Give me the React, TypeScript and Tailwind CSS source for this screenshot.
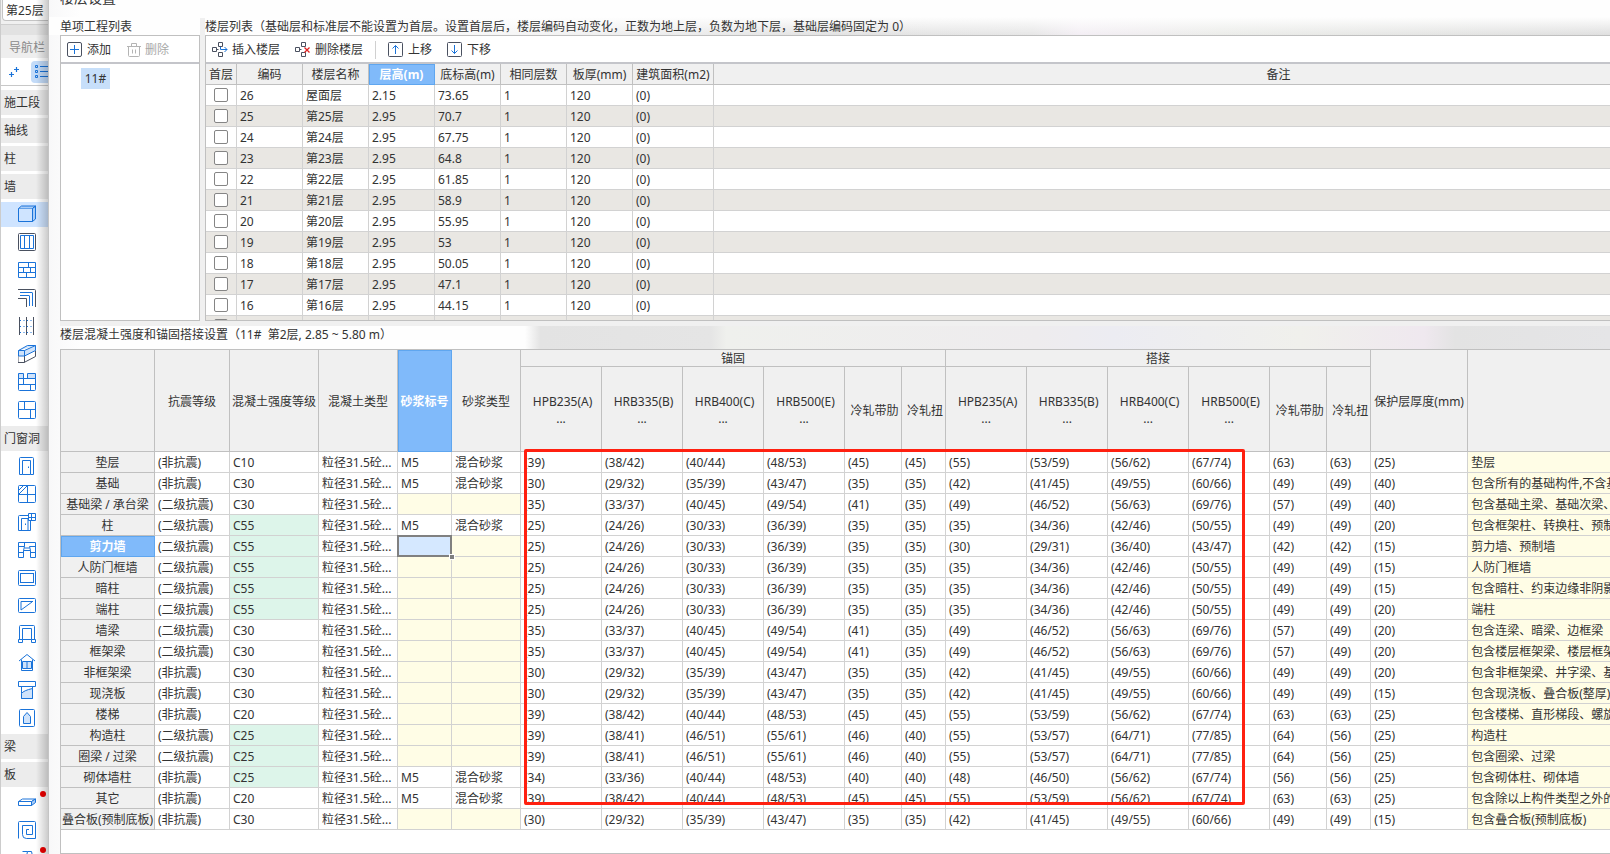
import type { ReactNode } from "react";

const BLUE = "#1a73d9";
const DARK = "#4a5160";

function Icon({ children, size = 18 }: { children: ReactNode; size?: number }) {
  return (
    <svg
      width={size}
      height={size}
      viewBox={`0 0 ${size} ${size}`}
      fill="none"
      stroke={BLUE}
      strokeWidth="1"
      className="block shrink-0"
      aria-hidden="true"
    >
      {children}
    </svg>
  );
}

type NavItem = { text: string } | { name: string; icon: ReactNode; active?: boolean; dot?: boolean };

const navItems: NavItem[] = [
  { text: "施工段" },
  { text: "轴线" },
  { text: "柱" },
  { text: "墙" },
  {
    name: "剪力墙",
    active: true,
    icon: (
      <>
        <path d="M0.5 3.5h14v13h-14z" strokeLinejoin="round" />
        <path d="M0.5 3.5l3-2.5h14l-3 2.5M17.5 1v13l-3 2.5v-13z" fill="#a9cdf8" strokeLinejoin="round" />
      </>
    ),
  },
  {
    name: "人防门框墙",
    icon: (
      <>
        <rect x="0.5" y="0.5" width="17" height="17" rx="1" stroke={DARK} />
        <path d="M2.5 2.5h13v13h-13zM6.5 2.5v13M11.5 2.5v13" />
      </>
    ),
  },
  {
    name: "砌体墙",
    icon: <path d="M0.5 1.5h17v15h-17zM0.5 6.5h17M0.5 11.5h17M10.5 1.5v5M5.5 6.5v5M12.5 6.5v5M8.5 11.5v5" />,
  },
  {
    name: "砌体加筋",
    icon: (
      <>
        <path d="M0 0.5h16.5q1 0 1 1V18M0 9.5h8.5V18" stroke={DARK} />
        <path d="M2 3.5h12q0.5 0 0.5 0.5v13M2 6.5h9q0.5 0 0.5 0.5v10" />
      </>
    ),
  },
  {
    name: "保温墙",
    icon: (
      <>
        <path d="M1.5 0v18M8.5 0v18M15.5 0v18" stroke={DARK} />
        <path d="M2 3.5h13M2 9.5h13M2 15.5h13" strokeDasharray="1 2.5" />
      </>
    ),
  },
  {
    name: "暗梁",
    icon: (
      <>
        <path d="M0 10.5v7h6M6 17.500l11.500-6v-6M6.500 10.500v7" stroke={DARK} />
        <path d="M0.5 5.5l9-5h8v5l-11 5.5h-6zM0.5 5.5h6l11-5M6.5 5.5V11" fill="#cfe3fb" strokeLinejoin="round" />
      </>
    ),
  },
  {
    name: "墙垛",
    icon: (
      <>
        <path d="M0.5 0.5h5v5h-5zM9.5 0.5h8v5h-8z" fill="#cfe3fb" />
        <path d="M0.5 5.5h17v11q0 1-1 1h-15q-1 0-1-1zM0.5 11.5h17M5.5 5.5v6M12.5 11.5v6" />
      </>
    ),
  },
  {
    name: "幕墙",
    icon: (
      <>
        <rect x="0.5" y="0.5" width="17" height="17" rx="1" />
        <path d="M0.5 8.5h17M6.5 0.5v8M12.5 8.5v9" />
      </>
    ),
  },
  { text: "门窗洞" },
  {
    name: "门",
    icon: (
      <>
        <path d="M1.5 17.5v-16q0-1 1-1h12q1 0 1 1v16h-3v-14h-8v14zM4.5 17.5h8" />
        <path d="M10.5 9.500v1.500" />
      </>
    ),
  },
  {
    name: "窗",
    icon: (
      <>
        <rect x="0.500" y="0.5" width="17" height="17" rx="1" />
        <path d="M9.5 0.5v17M0 9.5h17.5M1 5l4-4M1 9l8-8" />
      </>
    ),
  },
  {
    name: "门联窗",
    icon: (
      <>
        <path d="M10.500 0.500h7v7h-7zM13.500 0.500v7M10.500 4.500h7" />
        <path d="M10.500 2.500H1.500q-1 0-1 1v14h12V7.500M3.500 17.500v-12h6.500v12M7.500 10.500v1.500" />
      </>
    ),
  },
  {
    name: "墙洞",
    icon: (
      <path d="M0.500 1.500h17v15h-5v-7h-7v7h-5zM0.500 5.500h6M11.500 5.500h6M6.500 1.500v4l-1 4M11.500 5.500l1 4M6.500 7h5M0.500 11.500h5M12.500 11.500h5" />
    ),
  },
  {
    name: "带形窗",
    icon: (
      <>
        <rect x="0.500" y="1.500" width="17" height="15" rx="1" />
        <rect x="2.500" y="4.500" width="13" height="9" />
      </>
    ),
  },
  {
    name: "带形洞",
    icon: (
      <>
        <rect x="0.500" y="1.500" width="17" height="14" rx="1" />
        <path d="M3 13V4.500h12M3 13L14 5" />
      </>
    ),
  },
  {
    name: "飘窗",
    icon: <path d="M1.500 14.500V1.500q0-1 1-1h13q1 0 1 1v13M4.500 14.500v-11h9v11M0.500 14.500h4v3h-4zM13.500 14.500h4v3h-4zM4.500 14.500h9" />,
  },
  {
    name: "老虎窗",
    icon: (
      <>
        <path d="M1 8l8-6.500L17 8M3.500 6.500v11h11v-11" strokeLinejoin="round" />
        <path d="M4.500 8.500h9v7h-9zM9 8.500v7" fill="#cfe3fb" />
      </>
    ),
  },
  {
    name: "过梁",
    icon: (
      <>
        <path d="M0.500 0.500h17v5h-17zM3.500 5.500h11v12h-11z" />
        <path d="M3.500 12.500q2-3 11-5v10h-11z" fill="#cfe3fb" />
      </>
    ),
  },
  {
    name: "壁龛",
    icon: (
      <>
        <rect x="1.500" y="0.500" width="15" height="17" rx="1" />
        <path d="M5.500 14.500v-7l3.500-4 3.500 4v7z" fill="#cfe3fb" />
      </>
    ),
  },
  { text: "梁" },
  { text: "板" },
  {
    name: "现浇板",
    dot: true,
    icon: (
      <>
        <path d="M0.500 8.500l4-2.500h13l-4 2.500zM0.500 8.500v4h13v-4" strokeLinejoin="round" />
        <path d="M13.500 8.500l4-2.500v3.500l-4 3z" fill="#a9cdf8" />
      </>
    ),
  },
  {
    name: "螺旋板",
    icon: <path d="M0.500 17.500v-16q0-1 1-1h15q1 0 1 1v16h-9q-4 0-4-4v-9h10v9h-6v-5h2.500" />,
  },
  {
    name: "坡道",
    dot: true,
    icon: <path d="M4.500 2.500h5l-3 14h-6M9.500 2.500h4l3 14h-10M2 10h9" />,
  },
];

const floorHeads = ["首层", "编码", "楼层名称", "层高(m)", "底标高(m)", "相同层数", "板厚(mm)", "建筑面积(m2)", "备注"];

const floors = [
  ["26", "屋面层", "2.15", "73.65"],
  ["25", "第25层", "2.95", "70.7"],
  ["24", "第24层", "2.95", "67.75"],
  ["23", "第23层", "2.95", "64.8"],
  ["22", "第22层", "2.95", "61.85"],
  ["21", "第21层", "2.95", "58.9"],
  ["20", "第20层", "2.95", "55.95"],
  ["19", "第19层", "2.95", "53"],
  ["18", "第18层", "2.95", "50.05"],
  ["17", "第17层", "2.95", "47.1"],
  ["16", "第16层", "2.95", "44.15"],
  ["15", "第15层", "2.95", "41.2"],
];

type Part = {
  name: string;
  seismic: string;
  grade: string;
  changed?: boolean;
  mortar?: boolean;
  values: string;
  cover: string;
  note: string;
};

const S_39 = "39 38/42 40/44 48/53 45 45 55 53/59 56/62 67/74 63 63";
const S_30 = "30 29/32 35/39 43/47 35 35 42 41/45 49/55 60/66 49 49";
const S_35 = "35 33/37 40/45 49/54 41 35 49 46/52 56/63 69/76 57 49";
const S_25 = "25 24/26 30/33 36/39 35 35 35 34/36 42/46 50/55 49 49";
const S_WALL = "25 24/26 30/33 36/39 35 35 30 29/31 36/40 43/47 42 42";
const S_TIE = "39 38/41 46/51 55/61 46 40 55 53/57 64/71 77/85 64 56";
const S_MASONRY = "34 33/36 40/44 48/53 40 40 48 46/50 56/62 67/74 56 56";

const parts: Part[] = [
  { name: "垫层", seismic: "(非抗震)", grade: "C10", mortar: true, values: S_39, cover: "25", note: "垫层" },
  { name: "基础", seismic: "(非抗震)", grade: "C30", mortar: true, values: S_30, cover: "40", note: "包含所有的基础构件,不含基础梁" },
  { name: "基础梁 / 承台梁", seismic: "(二级抗震)", grade: "C30", values: S_35, cover: "40", note: "包含基础主梁、基础次梁、承台梁" },
  { name: "柱", seismic: "(二级抗震)", grade: "C55", changed: true, mortar: true, values: S_25, cover: "20", note: "包含框架柱、转换柱、预制柱" },
  { name: "剪力墙", seismic: "(二级抗震)", grade: "C55", changed: true, values: S_WALL, cover: "15", note: "剪力墙、预制墙" },
  { name: "人防门框墙", seismic: "(二级抗震)", grade: "C55", changed: true, values: S_25, cover: "15", note: "人防门框墙" },
  { name: "暗柱", seismic: "(二级抗震)", grade: "C55", changed: true, values: S_25, cover: "15", note: "包含暗柱、约束边缘非阴影区" },
  { name: "端柱", seismic: "(二级抗震)", grade: "C55", changed: true, values: S_25, cover: "20", note: "端柱" },
  { name: "墙梁", seismic: "(二级抗震)", grade: "C30", values: S_35, cover: "20", note: "包含连梁、暗梁、边框梁" },
  { name: "框架梁", seismic: "(二级抗震)", grade: "C30", values: S_35, cover: "20", note: "包含楼层框架梁、楼层框架扁梁" },
  { name: "非框架梁", seismic: "(非抗震)", grade: "C30", values: S_30, cover: "20", note: "包含非框架梁、井字梁、基础联系梁" },
  { name: "现浇板", seismic: "(非抗震)", grade: "C30", values: S_30, cover: "15", note: "包含现浇板、叠合板(整厚)、螺旋板" },
  { name: "楼梯", seismic: "(非抗震)", grade: "C20", values: S_39, cover: "25", note: "包含楼梯、直形梯段、螺旋梯段" },
  { name: "构造柱", seismic: "(二级抗震)", grade: "C25", changed: true, values: S_TIE, cover: "25", note: "构造柱" },
  { name: "圈梁 / 过梁", seismic: "(二级抗震)", grade: "C25", changed: true, values: S_TIE, cover: "25", note: "包含圈梁、过梁" },
  { name: "砌体墙柱", seismic: "(非抗震)", grade: "C25", changed: true, mortar: true, values: S_MASONRY, cover: "25", note: "包含砌体柱、砌体墙" },
  { name: "其它", seismic: "(非抗震)", grade: "C20", mortar: true, values: S_39, cover: "25", note: "包含除以上构件类型之外的所有构件" },
  { name: "叠合板(预制底板)", seismic: "(非抗震)", grade: "C30", values: S_30, cover: "15", note: "包含叠合板(预制底板)" },
];

const SELECTED_PART = "剪力墙";
const steelHeads = ["HPB235(A)", "HRB335(B)", "HRB400(C)", "HRB500(E)", "冷轧带肋", "冷轧扭"];

const headCell =
  "border-r border-b border-[#c0c0c0] bg-[#f0f0f0] px-0 pt-[2px] pb-0 text-center font-normal whitespace-nowrap overflow-hidden";
const activeHead =
  "border-r border-b border-[#5fa6ef] bg-[#80bafa] px-0 pt-[2px] pb-0 text-center font-bold text-white whitespace-nowrap overflow-hidden shadow-[inset_1px_1px_0_#5fa6ef]";
const bodyCell =
  "h-[21px] border-r border-b border-[#d2d2d2] pt-[2px] pr-0 pb-0 pl-[3px] whitespace-nowrap overflow-hidden";

function ToolButton({ icon, label, disabled }: { icon: ReactNode; label: string; disabled?: boolean }) {
  return (
    <button type="button" disabled={disabled} className="flex items-center gap-1 disabled:text-[#a8a8a8]">
      {icon}
      <span>{label}</span>
    </button>
  );
}

function Sidebar() {
  return (
    <aside className="relative w-12 shrink-0 overflow-hidden border-l border-[#cccccc] bg-white">
      <div className="h-6 bg-[#f0f0f0] pl-px">
        <select
          aria-label="当前楼层"
          className="block h-[21px] w-24 appearance-none rounded-b border border-t-0 border-[#c4c4c4] bg-white pt-[2px] pl-[3px]"
        >
          <option>第25层</option>
        </select>
      </div>
      <div className="h-[11px] border-t border-[#cfcfcf] bg-[#e2e2e2]" />
      <div className="flex h-[23px] items-center bg-[#eeeeee] pt-[2px] pl-2 whitespace-nowrap text-[#8a8a8a]">
        导航栏
      </div>
      <div className="flex h-7 items-center border-b border-[#c8c8c8] bg-white">
        <button type="button" aria-label="新建" className="pl-2">
          <Icon size={10}>
            <path d="M0 7.500h5M2.500 5v5M5 2.500h5M7.500 0v5" strokeWidth="1.200" />
          </Icon>
        </button>
        <button
          type="button"
          aria-label="列表"
          className="ml-3 flex h-[22px] w-8 shrink-0 items-center rounded bg-[#c3dbf8] pl-[3px]"
        >
          <Icon size={18}>
            <path d="M1.500 2.500h2v2h-2zM1.500 7.500h2v2h-2zM1.500 12.500h2v2h-2zM6 3.500h12M6 8.500h12M6 13.500h12" />
          </Icon>
        </button>
      </div>
      <nav className="mt-1 flex flex-col gap-[3px]">
        {navItems.map((item, i) =>
          "text" in item ? (
            <button
              type="button"
              key={i}
              className="flex h-[25px] shrink-0 items-center bg-[#ececec] pt-px pl-[3px] whitespace-nowrap"
            >
              {item.text}
            </button>
          ) : (
            <button
              type="button"
              key={i}
              aria-label={item.name}
              className={
                item.active
                  ? "relative flex h-[25px] shrink-0 items-start bg-[#cfe4ff] pt-[3px] pl-[17px]"
                  : "relative flex h-[25px] shrink-0 items-start pt-[3px] pl-[17px]"
              }
            >
              <Icon>{item.icon}</Icon>
              {item.dot && <span className="absolute top-px left-[39px] size-[6px] rounded-full bg-[#f00000]" />}
            </button>
          ),
        )}
      </nav>
      <div className="pointer-events-none absolute inset-y-0 right-0 w-3 bg-linear-to-r from-black/0 to-black/20" />
    </aside>
  );
}

function ProjectPanel() {
  return (
    <section className="flex w-[140px] shrink-0 flex-col">
      <h2 className="h-[18px] leading-5 whitespace-nowrap">单项工程列表</h2>
      <div className="flex flex-1 flex-col border border-[#c0c0c0] bg-white">
        <div className="flex h-7 items-center gap-4 border-b-2 border-[#c4c5ca] pt-[2px] pl-[6px]">
          <ToolButton
            label="添加"
            icon={
              <Icon size={16}>
                <rect x="0.500" y="0.500" width="14" height="14" rx="1.500" stroke={DARK} />
                <path d="M7.500 3v9M3 7.500h9" />
              </Icon>
            }
          />
          <ToolButton
            label="删除"
            disabled
            icon={
              <Icon size={14}>
                <path
                  d="M0 3.500h14M4.500 3.500v-3h5v3M1.500 3.500v9q0 1 1 1h9q1 0 1-1v-9M5.500 6.500v4M8.500 6.500v4"
                  stroke="#b4b4b4"
                />
              </Icon>
            }
          />
        </div>
        <button type="button" className="mt-1 ml-5 flex h-[21px] w-[29px] items-center justify-center bg-[#c7dffa]">
          11#
        </button>
      </div>
    </section>
  );
}

function FloorPanel() {
  return (
    <section className="flex min-w-0 flex-1 flex-col">
      <h2 className="h-[18px] leading-5 whitespace-nowrap">
        楼层列表（基础层和标准层不能设置为首层。设置首层后，楼层编码自动变化，正数为地上层，负数为地下层，基础层编码固定为 0）
      </h2>
      <div className="border-y border-l border-[#c0c0c0] bg-white">
        <div className="flex h-7 items-center border-b-2 border-[#c4c5ca] pt-[2px] pl-[6px]">
          <ToolButton
            label="插入楼层"
            icon={
              <Icon size={16}>
                <path d="M0.500 5.500h4v4h-4zM6.500 0.500h4v4h-4zM6.500 10.500h4v4h-4zM5 7.500h1.500" stroke={DARK} />
                <path d="M8.500 5v2.500H15M12.500 5l2.500 2.500-2.500 2.500" />
              </Icon>
            }
          />
          <span className="w-[15px]" />
          <ToolButton
            label="删除楼层"
            icon={
              <Icon size={16}>
                <path d="M0.500 5.500h4v4h-4zM6.500 0.500h4v4h-4zM6.500 10.500h4v4h-4zM5 7.500h1.500" stroke={DARK} />
                <path d="M9.500 5.500l5 5M14.500 5.500l-5 5" stroke="#e02020" strokeWidth="1.300" />
              </Icon>
            }
          />
          <span className="mx-3 h-[18px] w-px bg-[#d0d0d0]" />
          <ToolButton
            label="上移"
            icon={
              <Icon size={16}>
                <rect x="0.500" y="0.500" width="14" height="14" rx="1" stroke={DARK} />
                <path d="M7.500 12V3.500M4.500 6.500l3-3 3 3" />
              </Icon>
            }
          />
          <span className="w-[15px]" />
          <ToolButton
            label="下移"
            icon={
              <Icon size={16}>
                <rect x="0.500" y="0.500" width="14" height="14" rx="1" stroke={DARK} />
                <path d="M7.500 3v8.500M4.500 8.500l3 3 3-3" />
              </Icon>
            }
          />
        </div>
        <div className="h-64 overflow-hidden">
          <table className="w-[1638px] table-fixed border-separate border-spacing-0">
            <colgroup>
              <col className="w-[31px]" />
              <col className="w-[66px]" />
              <col className="w-[66px]" />
              <col className="w-[66px]" />
              <col className="w-[66px]" />
              <col className="w-[66px]" />
              <col className="w-[66px]" />
              <col className="w-[81px]" />
              <col />
            </colgroup>
            <thead>
              <tr>
                {floorHeads.map((h) => (
                  <th key={h} scope="col" className={h === "层高(m)" ? `h-[21px] ${activeHead}` : `h-[21px] ${headCell}`}>
                    {h}
                  </th>
                ))}
              </tr>
            </thead>
            <tbody>
              {floors.map(([code, name, height, base]) => (
                <tr key={code} className="odd:bg-white even:bg-[#e9e7e3]">
                  <td className="h-[21px] border-r border-b border-[#d2d2d2] p-0">
                    <input
                      type="checkbox"
                      aria-label={`${name} 首层`}
                      className="mx-auto block size-[14px] appearance-none rounded-xs border border-[#858585] bg-white checked:bg-[#80bafa]"
                    />
                  </td>
                  <td className={bodyCell}>{code}</td>
                  <td className={bodyCell}>{name}</td>
                  <td className={bodyCell}>{height}</td>
                  <td className={bodyCell}>{base}</td>
                  <td className={bodyCell}>1</td>
                  <td className={bodyCell}>120</td>
                  <td className={bodyCell}>(0)</td>
                  <td className={bodyCell} />
                </tr>
              ))}
            </tbody>
          </table>
        </div>
      </div>
    </section>
  );
}

function SteelHead({ label }: { label: string }) {
  return (
    <th scope="col" className={`h-[85px] leading-[17px] ${headCell}`}>
      &nbsp;{label}
      {label.startsWith("H") && <div>...</div>}
    </th>
  );
}

function MortarCells({ part }: { part: Part }) {
  if (part.mortar) {
    return (
      <>
        <td className={bodyCell}>M5</td>
        <td className={bodyCell}>混合砂浆</td>
      </>
    );
  }
  return (
    <>
      {part.name === SELECTED_PART ? (
        <td className="relative h-[21px] border-r border-b border-[#d2d2d2] bg-[#d5e8ff] p-0">
          <div className="absolute -inset-px border-2 border-[#808080]" />
          <div className="absolute -right-1 -bottom-1 size-[6px] border border-white bg-[#808080]" />
        </td>
      ) : (
        <td className={`bg-[#fffde6] ${bodyCell}`} />
      )}
      <td className={`bg-[#fffde6] ${bodyCell}`} />
    </>
  );
}

function StrengthTable() {
  return (
    <div className="relative flex-1 overflow-hidden border-y border-l border-[#c0c0c0] bg-white">
      <table className="w-[1807px] table-fixed border-separate border-spacing-0">
        <colgroup>
          <col className="w-[94px]" />
          <col className="w-[75px]" />
          <col className="w-[89px]" />
          <col className="w-[79px]" />
          <col className="w-[54px]" />
          <col className="w-[69px]" />
          <col span={4} className="w-[81px]" />
          <col className="w-[57px]" />
          <col className="w-[44px]" />
          <col span={4} className="w-[81px]" />
          <col className="w-[57px]" />
          <col className="w-[44px]" />
          <col className="w-[97px]" />
          <col />
        </colgroup>
        <thead>
          <tr>
            <th rowSpan={2} className={headCell} />
            <th rowSpan={2} scope="col" className={headCell}>抗震等级</th>
            <th rowSpan={2} scope="col" className={headCell}>混凝土强度等级</th>
            <th rowSpan={2} scope="col" className={headCell}>混凝土类型</th>
            <th rowSpan={2} scope="col" className={activeHead}>砂浆标号</th>
            <th rowSpan={2} scope="col" className={headCell}>砂浆类型</th>
            <th colSpan={6} scope="colgroup" className={`h-[17px] leading-[14px] ${headCell}`}>锚固</th>
            <th colSpan={6} scope="colgroup" className={`h-[17px] leading-[14px] ${headCell}`}>搭接</th>
            <th rowSpan={2} scope="col" className={headCell}>保护层厚度(mm)</th>
            <th rowSpan={2} className={headCell} />
          </tr>
          <tr>
            {steelHeads.map((h) => (
              <SteelHead key={`a-${h}`} label={h} />
            ))}
            {steelHeads.map((h) => (
              <SteelHead key={`l-${h}`} label={h} />
            ))}
          </tr>
        </thead>
        <tbody>
          {parts.map((part) => (
            <tr key={part.name}>
              <th scope="row" className={part.name === SELECTED_PART ? `h-[21px] ${activeHead}` : `h-[21px] ${headCell}`}>
                {part.name}
              </th>
              <td className={bodyCell}>{part.seismic}</td>
              <td className={part.changed ? `bg-[#ddf5ea] ${bodyCell}` : bodyCell}>{part.grade}</td>
              <td className={bodyCell}>粒径31.5砼...</td>
              <MortarCells part={part} />
              {part.values.split(" ").map((v, i) => (
                <td key={i} className={bodyCell}>{`(${v})`}</td>
              ))}
              <td className={bodyCell}>{`(${part.cover})`}</td>
              <td className={`bg-[#fffde6] ${bodyCell}`}>{part.note}</td>
            </tr>
          ))}
        </tbody>
      </table>
      <div className="pointer-events-none absolute top-[99px] left-[463px] h-[356px] w-[721px] rounded-xs border-3 border-[#ff2010]" />
    </div>
  );
}

export default function App() {
  return (
    <div className="flex h-screen overflow-hidden bg-white font-['Noto_Sans','Noto_Sans_CJK_SC',sans-serif] text-[12px] leading-[18px] text-[#333333]">
      <Sidebar />
      <main className="flex min-w-0 flex-1 flex-col overflow-hidden border-l border-[#c4c4c4] bg-linear-to-r from-[#f8f8f9] to-[#fefefe] to-2%">
        <div className="flex h-[17px] shrink-0 items-start pl-[11px]">
          <div className="flex h-2 items-end overflow-hidden">
            <h1 className="text-[14px] leading-5">楼层设置</h1>
          </div>
        </div>
        <div className="flex shrink-0 bg-[linear-gradient(to_bottom,#fefefe,transparent),linear-gradient(to_right,#fefefe_20%,#e2e2e2_50%,#e6e6e6_63%,#f3eef4_66%,#ebece9_75%,#dfdfdf_100%)] bg-[length:100%_18px] bg-no-repeat pl-[11px]">
          <ProjectPanel />
          <div className="mt-px w-[5px] shrink-0 bg-[#f0f0f0]" />
          <FloorPanel />
        </div>
        <div className="ml-[11px] h-[5px] shrink-0 bg-[#f0f0f0]" />
        <section className="flex min-h-0 flex-1 flex-col pl-[11px]">
          <h2 className="h-[23px] shrink-0 bg-[linear-gradient(to_right,transparent_30%,#e3e3e3_31%,#e5e5e5_42%,#eff0ed_43%,#eeecee_63%,#ececf2_68%,#f0f0ec_80%,#efe8ef_88%,#e3e3e3_90%,#e5e5e7_100%)] whitespace-pre">
            楼层混凝土强度和锚固搭接设置（11#  第2层, 2.85 ~ 5.80 m）
          </h2>
          <StrengthTable />
        </section>
      </main>
    </div>
  );
}
